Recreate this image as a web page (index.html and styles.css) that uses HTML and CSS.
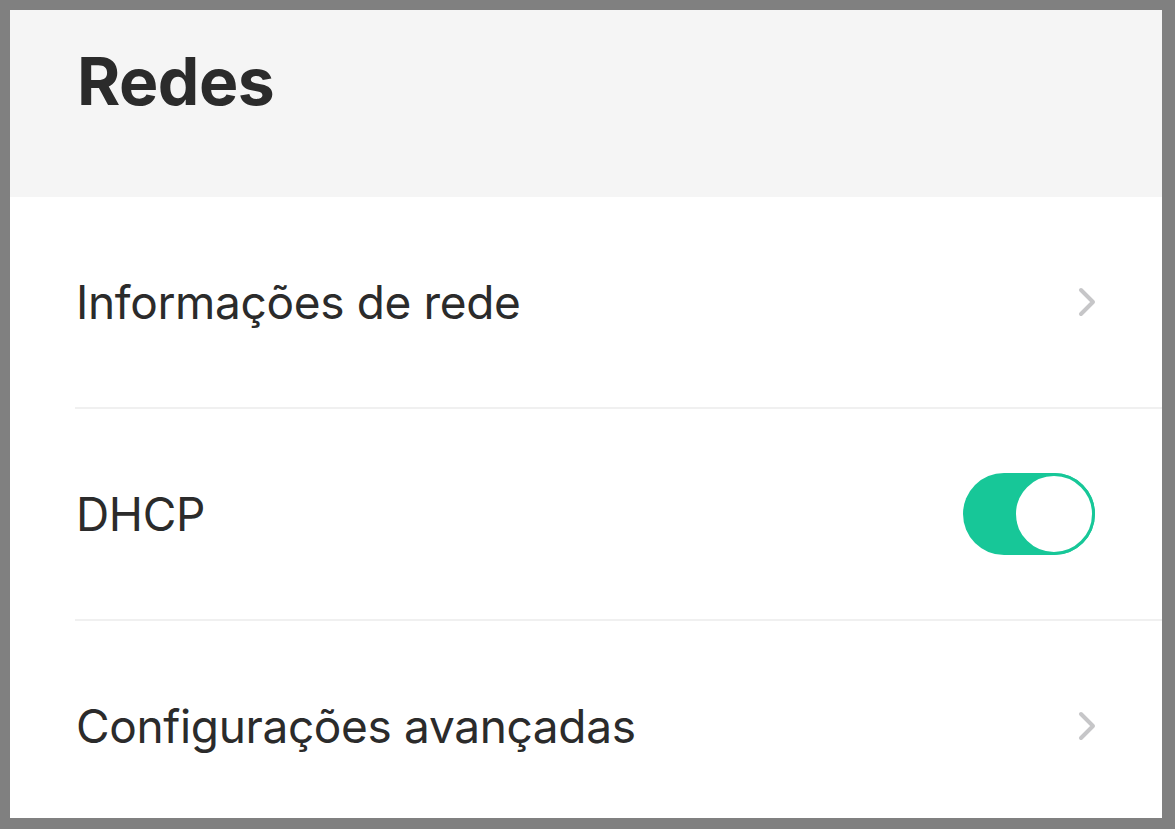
FILE: index.html
```html
<!DOCTYPE html>
<html lang="pt">
  <head>
    <meta charset="UTF-8" />
    <meta name="viewport" content="width=device-width, initial-scale=1.0" />
    <title>Redes</title>
    <link rel="stylesheet" href="styles.css">
  </head>
  <body>
    <div class="screen">
      <div class="header">
        <h1>Redes</h1>
      </div>

      <div class="list">
        <div class="row">
          <span class="label">Informações de rede</span>
          <svg class="chevron" width="18" height="30" viewBox="0 0 18 30">
            <path d="M3 3 L15 15 L3 27" fill="none" stroke="#c6c6c8" stroke-width="4" stroke-linecap="round" stroke-linejoin="round" />
          </svg>
        </div>
        <div class="row">
          <span class="label">DHCP</span>
          <div class="toggle on">
            <div class="knob"></div>
          </div>
        </div>
        <div class="row">
          <span class="label">Configurações avançadas</span>
          <svg class="chevron" width="18" height="30" viewBox="0 0 18 30">
            <path d="M3 3 L15 15 L3 27" fill="none" stroke="#c6c6c8" stroke-width="4" stroke-linecap="round" stroke-linejoin="round" />
          </svg>
        </div>
      </div>
    </div>
  </body>
</html>
```

FILE: styles.css
```css
html,
body {
  margin: 0;
  height: 100%;
}
body {
  background-color: #808080;
  padding: 10px 13px 11px 10px;
  box-sizing: border-box;
  font-family: Inter, "Noto Sans", sans-serif;
  color: #2b2b2b;
}
.screen {
  height: 100%;
  background-color: white;
  overflow: hidden;
}
.header {
  height: 187px;
  background-color: #f5f5f5;
  padding: 0 67px;
  box-sizing: border-box;
}
.header h1 {
  margin: 0;
  padding-top: 31px;
  font-size: 66px;
  font-weight: 700;
  line-height: 80px;
  letter-spacing: -0.5px;
}
.row {
  display: flex;
  align-items: center;
  justify-content: space-between;
  height: 210px;
  margin-left: 65px;
  padding: 0 67px 0 1px;
  border-bottom: 2px solid #f0f0f0;
}
.label {
  font-size: 46px;
  letter-spacing: -0.35px;
}
.chevron {
  display: block;
  margin-right: -1px;
}
.toggle {
  width: 132px;
  height: 82px;
  border-radius: 41px;
  background-color: #e5e5e5;
  box-sizing: border-box;
  display: flex;
  justify-content: flex-start;
}
.toggle.on {
  background-color: #17c798;
  justify-content: flex-end;
}
.knob {
  width: 82px;
  height: 82px;
  border-radius: 50%;
  background-color: white;
  border: 3px solid #17c798;
  box-sizing: border-box;
}
```
